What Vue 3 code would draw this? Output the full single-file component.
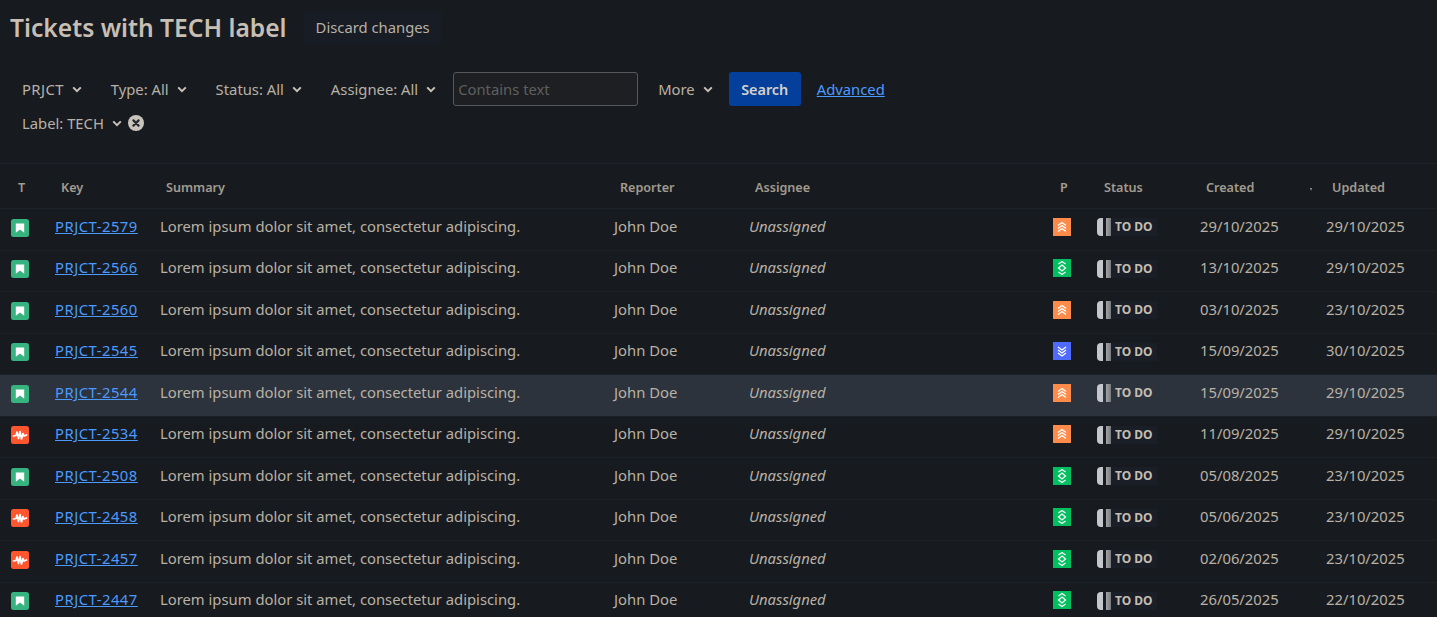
<script setup>
const rows = [
  ['s', '2579', 'o', '29/10/2025', '29/10/2025'],
  ['s', '2566', 'g', '13/10/2025', '29/10/2025'],
  ['s', '2560', 'o', '03/10/2025', '23/10/2025'],
  ['s', '2545', 'b', '15/09/2025', '30/10/2025'],
  ['s', '2544', 'o', '15/09/2025', '29/10/2025'],
  ['r', '2534', 'o', '11/09/2025', '29/10/2025'],
  ['s', '2508', 'g', '05/08/2025', '23/10/2025'],
  ['r', '2458', 'g', '05/06/2025', '23/10/2025'],
  ['r', '2457', 'g', '02/06/2025', '23/10/2025'],
  ['s', '2447', 'g', '26/05/2025', '22/10/2025'],
]
const filters = ['PRJCT', 'Type: All', 'Status: All', 'Assignee: All']
const prioColor = { o: '#ff8b4a', g: '#00bf5f', b: '#4f6bff' }
</script>

<template>
  <div class="page">
    <header class="head">
      <h1>Tickets with TECH label</h1>
      <button class="discard">Discard changes</button>
    </header>

    <section class="filters">
      <div class="line">
        <span v-for="f in filters" :key="f" class="drop" :class="{ proj: f === 'PRJCT' }">
          {{ f }}
          <svg class="chev" viewBox="0 0 10 7"><path d="M1.2 1.4 5 5.2l3.8-3.8" /></svg>
        </span>
        <input class="text" placeholder="Contains text" />
        <span class="drop more">
          More
          <svg class="chev" viewBox="0 0 10 7"><path d="M1.2 1.4 5 5.2l3.8-3.8" /></svg>
        </span>
        <button class="search">Search</button>
        <a class="adv">Advanced</a>
      </div>
      <div class="line second">
        <span class="drop label">
          Label: TECH
          <svg class="chev" viewBox="0 0 10 7"><path d="M1.2 1.4 5 5.2l3.8-3.8" /></svg>
        </span>
        <svg class="clear" viewBox="0 0 16 16">
          <circle cx="8" cy="8" r="8" fill="#c9c4bb" />
          <path d="M5.4 5.4l5.2 5.2M10.6 5.4l-5.2 5.2" stroke="#23262b" stroke-width="2.2" stroke-linecap="round" />
        </svg>
      </div>
    </section>

    <div class="table">
      <div class="row th">
        <span class="c-t">T</span>
        <span>Key</span>
        <span>Summary</span>
        <span>Reporter</span>
        <span>Assignee</span>
        <span class="c-p">P</span>
        <span class="c-s">Status</span>
        <span class="c-created">Created<i class="sort"></i></span>
        <span>Updated</span>
      </div>
      <div v-for="r in rows" :key="r[1]" class="row td" :class="{ hover: r[1] === '2544' }">
        <span class="c-icon">
          <svg class="ico" viewBox="0 0 18 18">
            <template v-if="r[0] === 's'">
              <rect width="18" height="18" rx="2.5" fill="#36b37e" />
              <path d="M4.800 4.600h8.400v9.200L9 10.600 4.800 13.800z" fill="#fff" />
            </template>
            <template v-else>
              <rect width="18" height="18" rx="2.5" fill="#ff5630" />
              <path d="M2.500 10 5 9.500 6 6l1.500 6.500L9 5.500l1.500 7.500L12 7.500l1 2.500 2.500-1" fill="none" stroke="#fff" stroke-width="1.700" stroke-linejoin="round" stroke-linecap="round" />
            </template>
          </svg>
        </span>
        <span class="cell"><a class="key">PRJCT-{{ r[1] }}</a></span>
        <span class="cell">Lorem ipsum dolor sit amet, consectetur adipiscing.</span>
        <span class="cell">John Doe</span>
        <span class="cell un">Unassigned</span>
        <span class="c-icon prio">
          <svg class="ico" viewBox="0 0 18 18">
            <rect width="18" height="18" :fill="prioColor[r[2]]" />
            <g fill="none" stroke="#fff" stroke-width="1.300">
              <template v-if="r[2] === 'o'">
                <path d="M5 7.500 9 4.500l4 3M5 10.500 9 7.500l4 3M5 13.500 9 10.500l4 3" />
              </template>
              <template v-else-if="r[2] === 'g'">
                <path d="M5.500 5 9 2.500 12.500 5M9 6l3.500 3L9 12 5.500 9zM5.500 13 9 15.500l3.500-2.500" />
              </template>
              <template v-else>
                <path d="M5 5 9 8l4-3M5 8 9 11l4-3M5 11 9 14l4-3" />
              </template>
            </g>
          </svg>
        </span>
        <span class="status">
          <i class="bar a"></i><i class="bar b"></i><b>TO DO</b>
        </span>
        <span class="cell">{{ r[3] }}</span>
        <span class="cell">{{ r[4] }}</span>
      </div>
    </div>
  </div>
</template>

<style>
html, body { margin: 0; background: #171b20; overflow: hidden; }
</style>

<style scoped>
.page {
  height: 617px;
  overflow: hidden;
  background: #171b20;
  color: #b9b1a5;
  font-family: "Noto Sans", "Open Sans", sans-serif;
  font-size: 14.8px;
}
.head {
  display: flex;
  align-items: center;
  gap: 17px;
  padding: 10px 10px 0;
  height: 35px;
}
h1 {
  margin: 0;
  font-size: 24.6px;
  font-weight: 600;
  color: #c7bfb4;
}
.discard {
  height: 33px;
  padding: 0 12px 2px;
  background: #181c25;
  border: 0;
  border-radius: 3px;
  color: #b9b1a5;
  font: inherit;
}
.filters { padding: 27px 22px 0; height: 91px; border-bottom: 1px solid #1e232b; }
.line { display: flex; align-items: center; height: 34px; }
.drop { display: inline-flex; align-items: center; gap: 8px; margin-right: 29px; white-space: nowrap; }
.proj { letter-spacing: 0.4px; }
.more { margin: 0 0 0 20px; }
.label { margin-right: 0; }
.chev { width: 10px; height: 7px; fill: none; stroke: #c9c2b7; stroke-width: 2; }
.text {
  box-sizing: border-box;
  width: 185px;
  height: 34px;
  margin-left: -12px;
  padding: 2px 4px;
  background: #1d1f22;
  border: 1px solid #56585c;
  border-radius: 3px;
  color: #b9b1a5;
  font: inherit;
}
.text::placeholder { color: #5f5f5f; opacity: 1; }
.search {
  height: 34px;
  width: 72px;
  margin-left: 16px;
  padding: 0;
  background: #043f9c;
  border: 0;
  border-radius: 3px;
  color: #d6d2ca;
  font: inherit;
  font-size: 14.4px;
  font-weight: 600;
}
.adv { margin-left: 16px; color: #4c9aff; text-decoration: underline; }
.clear { width: 16px; height: 16px; margin-left: 6px; }
.row {
  display: grid;
  grid-template-columns: 50px 105px 454px 135px 296px 51px 104px 126px 116px;
  align-items: center;
  box-sizing: border-box;
  white-space: nowrap;
}
.row > span { padding-left: 5px; }
.th {
  height: 45px;
  padding-top: 2px;
  font-size: 12.6px;
  font-weight: 600;
  color: #a39b8f;
  border-bottom: 1px solid #1e232b;
}
.th > span { padding-left: 11px; }
.th > .c-t { padding-left: 18px; }
.th > .c-p { padding-left: 20px; }
.th > .c-s { padding-left: 13px; }
.td { height: 41.5px; border-bottom: 1px solid #1c2027; }
.hover { background: #2c333d; }
.row > .cell { padding-bottom: 7px; }
.c-created { position: relative; }
.sort {
  position: absolute;
  left: 115px;
  top: 9px;
  width: 0;
  height: 0;
  border-left: 1.500px solid transparent;
  border-right: 1.500px solid transparent;
  border-top: 3px solid #a39b8f;
}
.row > .c-icon { display: flex; padding-left: 11px; padding-bottom: 3px; }
.row > .prio { padding-left: 13px; padding-bottom: 5px; }
.ico { width: 18px; height: 18px; display: block; }
.key { color: #4c9aff; text-decoration: underline; letter-spacing: 0.5px; }
.un { font-style: italic; }
.row > .status { display: flex; align-items: center; padding-left: 6px; padding-bottom: 4px; }
.bar { display: block; height: 18px; }
.bar.a { width: 6px; background: #c4c8cd; border-radius: 4px 0 0 4px; }
.bar.b { width: 5px; margin-left: 3px; background: linear-gradient(90deg, #a2a4a7, #77797c); }
.status b {
  padding: 0 4px;
  line-height: 18px;
  font-size: 12px;
  font-weight: 700;
  color: #c4bdb2;
  background: #1a1e27;
}
.hover .status b { background: transparent; }
</style>
